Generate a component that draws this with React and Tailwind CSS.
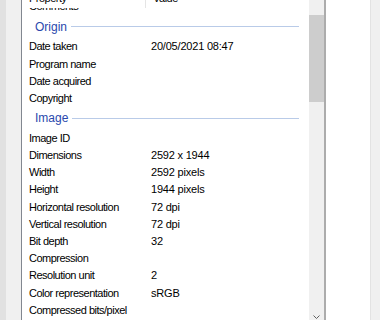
import React from "react";

const origin = [
  ["Date taken", "20/05/2021 08:47"],
  ["Program name", ""],
  ["Date acquired", ""],
  ["Copyright", ""],
];

const image = [
  ["Image ID", ""],
  ["Dimensions", "2592 x 1944"],
  ["Width", "2592 pixels"],
  ["Height", "1944 pixels"],
  ["Horizontal resolution", "72 dpi"],
  ["Vertical resolution", "72 dpi"],
  ["Bit depth", "32"],
  ["Compression", ""],
  ["Resolution unit", "2"],
  ["Color representation", "sRGB"],
  ["Compressed bits/pixel", ""],
];

function Row({ label, value }) {
  return (
    <div className="h-[17.2px] flex items-center text-[11px] text-black shrink-0">
      <div className="w-[129px] pl-[7px] shrink-0 tracking-[-0.5px] whitespace-nowrap">{label}</div>
      <div className="tracking-[-0.2px] whitespace-nowrap">{value}</div>
    </div>
  );
}

function Group({ title }) {
  return (
    <div className="h-[22.8px] flex items-center pl-[13px] pr-[10px] shrink-0">
      <span className="text-[12px] text-[#2a48ad]">{title}</span>
      <div className="flex-1 ml-[4px] h-px bg-[#b9cbe8]" />
    </div>
  );
}

export default function App() {
  return (
    <div className="w-[380px] h-[320px] overflow-hidden flex bg-[#f0f0f0] font-['Liberation_Sans',Arial,sans-serif]">
      <div className="w-[6px] bg-[#e1e1e1]" />
      <div className="w-[15px]" />

      {/* details list */}
      <div className="w-[305px] flex bg-white border-l border-[#828790] border-r-2 border-r-[#acacac]">
        <div className="relative w-[287px] overflow-hidden">
          <div className="absolute inset-x-0 top-0 h-[8px] bg-white overflow-hidden flex z-10 text-[11px] text-black">
            <div className="w-[123px] pl-[7px] -mt-[10px] h-[17px] leading-[17px] tracking-[-0.5px] shrink-0">Property</div>
            <div className="w-px h-full bg-[#e5e5e5]" />
            <div className="pl-[7px] -mt-[10px] h-[17px] leading-[17px] tracking-[-0.5px]">Value</div>
          </div>

          <div className="-mt-[2px] flex flex-col">
            <Row label="Comments" value="" />
            <Group title="Origin" />
            {origin.map(([l, v]) => (
              <Row key={l} label={l} value={v} />
            ))}
            <Group title="Image" />
            {image.map(([l, v]) => (
              <Row key={l} label={l} value={v} />
            ))}
          </div>
        </div>

        {/* scrollbar */}
        <div className="w-[15px] bg-[#f0f0f0] flex flex-col">
          <div className="h-[15px]" />
          <div className="h-[87px] w-[15px] bg-[#cdcdcd]" />
          <div className="flex-1" />
          <div className="flex justify-center pb-[1px]">
            <svg width="7" height="4" viewBox="0 0 7 4">
              <path d="M0.5 0.5 L3.5 3.5 L6.5 0.5" fill="none" stroke="#606060" strokeWidth="1" />
            </svg>
          </div>
        </div>
      </div>

      <div className="w-[44px] bg-white" />
      <div className="w-[10px] border-l border-[#e3e3e3] bg-[#f0f0f0]" />
    </div>
  );
}
